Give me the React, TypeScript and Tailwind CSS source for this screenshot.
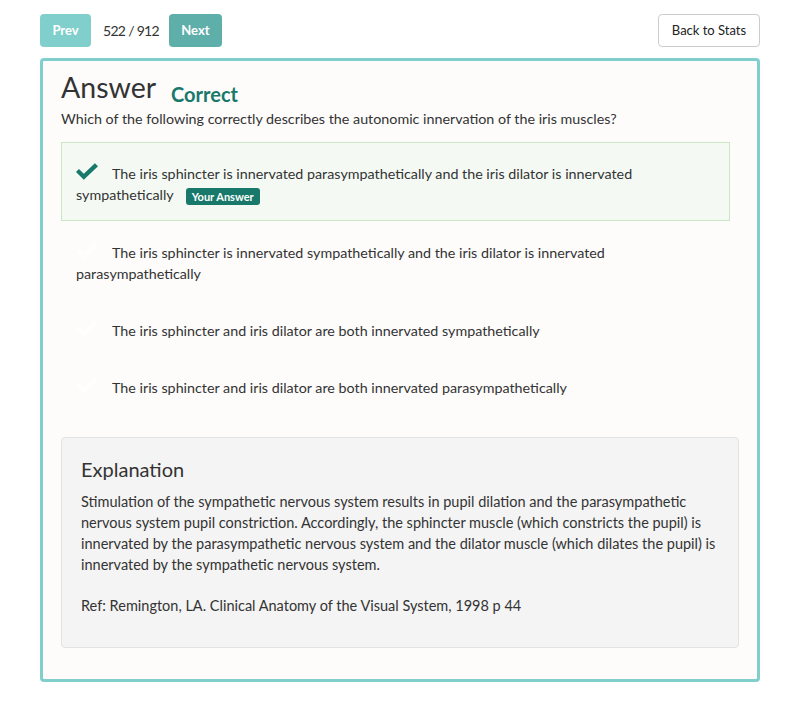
const options = [
  {
    text: "The iris sphincter is innervated parasympathetically and the iris dilator is innervated sympathetically",
    chosen: true,
  },
  {
    text: "The iris sphincter is innervated sympathetically and the iris dilator is innervated parasympathetically",
    chosen: false,
  },
  {
    text: "The iris sphincter and iris dilator are both innervated sympathetically",
    chosen: false,
  },
  {
    text: "The iris sphincter and iris dilator are both innervated parasympathetically",
    chosen: false,
  },
];

function CheckMark({ visible }: { visible: boolean }) {
  return (
    <svg
      viewBox="0 0 24 18"
      className="inline-block w-[22px] h-[17px] mr-[14px] align-[-1px]"
      fill={visible ? "#18786a" : "#fefefe"}
    >
      <path d="M0 9.5 L3.2 6.3 L8.5 11.4 L20.6 0 L24 3.3 L8.5 18 Z" />
    </svg>
  );
}

export default function App() {
  return (
    <div
      className="px-10 pt-[14px] pb-6 text-[#333] bg-white"
      style={{ fontFamily: "Lato, 'Open Sans', sans-serif" }}
    >
      {/* top bar */}
      <div className="flex items-center justify-between h-[33px]">
        <div className="flex items-center h-full">
          <button className="h-full w-[51px] rounded bg-[#80cfcc] text-white text-[13px] font-bold">
            Prev
          </button>
          <span className="ml-3 mr-[10px] text-[14px] tracking-[-0.7px] text-[#333]">522 / 912</span>
          <button className="h-full w-[53px] rounded bg-[#5eaeaa] text-white text-[13px] font-bold">
            Next
          </button>
        </div>
        <button className="h-full w-[102px] rounded border border-[#cccccc] bg-white text-[13px] text-[#222]">
          Back to Stats
        </button>
      </div>

      {/* card */}
      <div className="mt-[11px] border-[3px] border-[#80cfcc] rounded bg-[#fdfcfb] px-[18px] pt-[6px] pb-[31px]">
        <div className="flex items-start">
          <h1 className="text-[28.5px] leading-[40px] text-[#333]">Answer</h1>
          <span className="ml-[15px] mt-[13px] text-[20px] leading-[28px] font-bold text-[#18786a]">
            Correct
          </span>
        </div>
        <p className="text-[14.3px] leading-[20px] text-[#333] mt-[1px]">
          Which of the following correctly describes the autonomic innervation of the iris muscles?
        </p>

        <div className="mt-[13px] mr-[9px]">
          {options.map((o, i) => (
            <div
              key={i}
              className={`border pl-[14px] pr-4 pt-[20px] text-[14.3px] leading-[21px] text-[#333] ${
                o.chosen ? "pb-[15px] bg-[#f4faf3] border-[#c9e7c5]" : "pb-[14px] border-transparent"
              }`}
            >
              <CheckMark visible={o.chosen} />
              {o.text}
              {o.chosen && (
                <span className="ml-[12px] inline-block rounded-[3px] bg-[#18786a] px-[6px] text-[11px] leading-[17px] font-bold text-white align-[-1px]">
                  Your Answer
                </span>
              )}
            </div>
          ))}
        </div>

        <div className="mt-[24px] rounded border border-[#e3e3e3] bg-[#f4f4f4] px-[19px] pt-[17px] pb-[31px]">
          <h2 className="text-[20px] leading-[28px] text-[#333]">Explanation</h2>
          <p className="mt-[8px] text-[14.5px] leading-[21px] text-[#333]">
            Stimulation of the sympathetic nervous system results in pupil dilation and the parasympathetic
            nervous system pupil constriction. Accordingly, the sphincter muscle (which constricts the pupil) is
            innervated by the parasympathetic nervous system and the dilator muscle (which dilates the pupil) is
            innervated by the sympathetic nervous system.
          </p>
          <p className="mt-[20px] text-[14.5px] leading-[21px] text-[#333]">
            Ref: Remington, LA. Clinical Anatomy of the Visual System, 1998 p 44
          </p>
        </div>
      </div>
    </div>
  );
}
